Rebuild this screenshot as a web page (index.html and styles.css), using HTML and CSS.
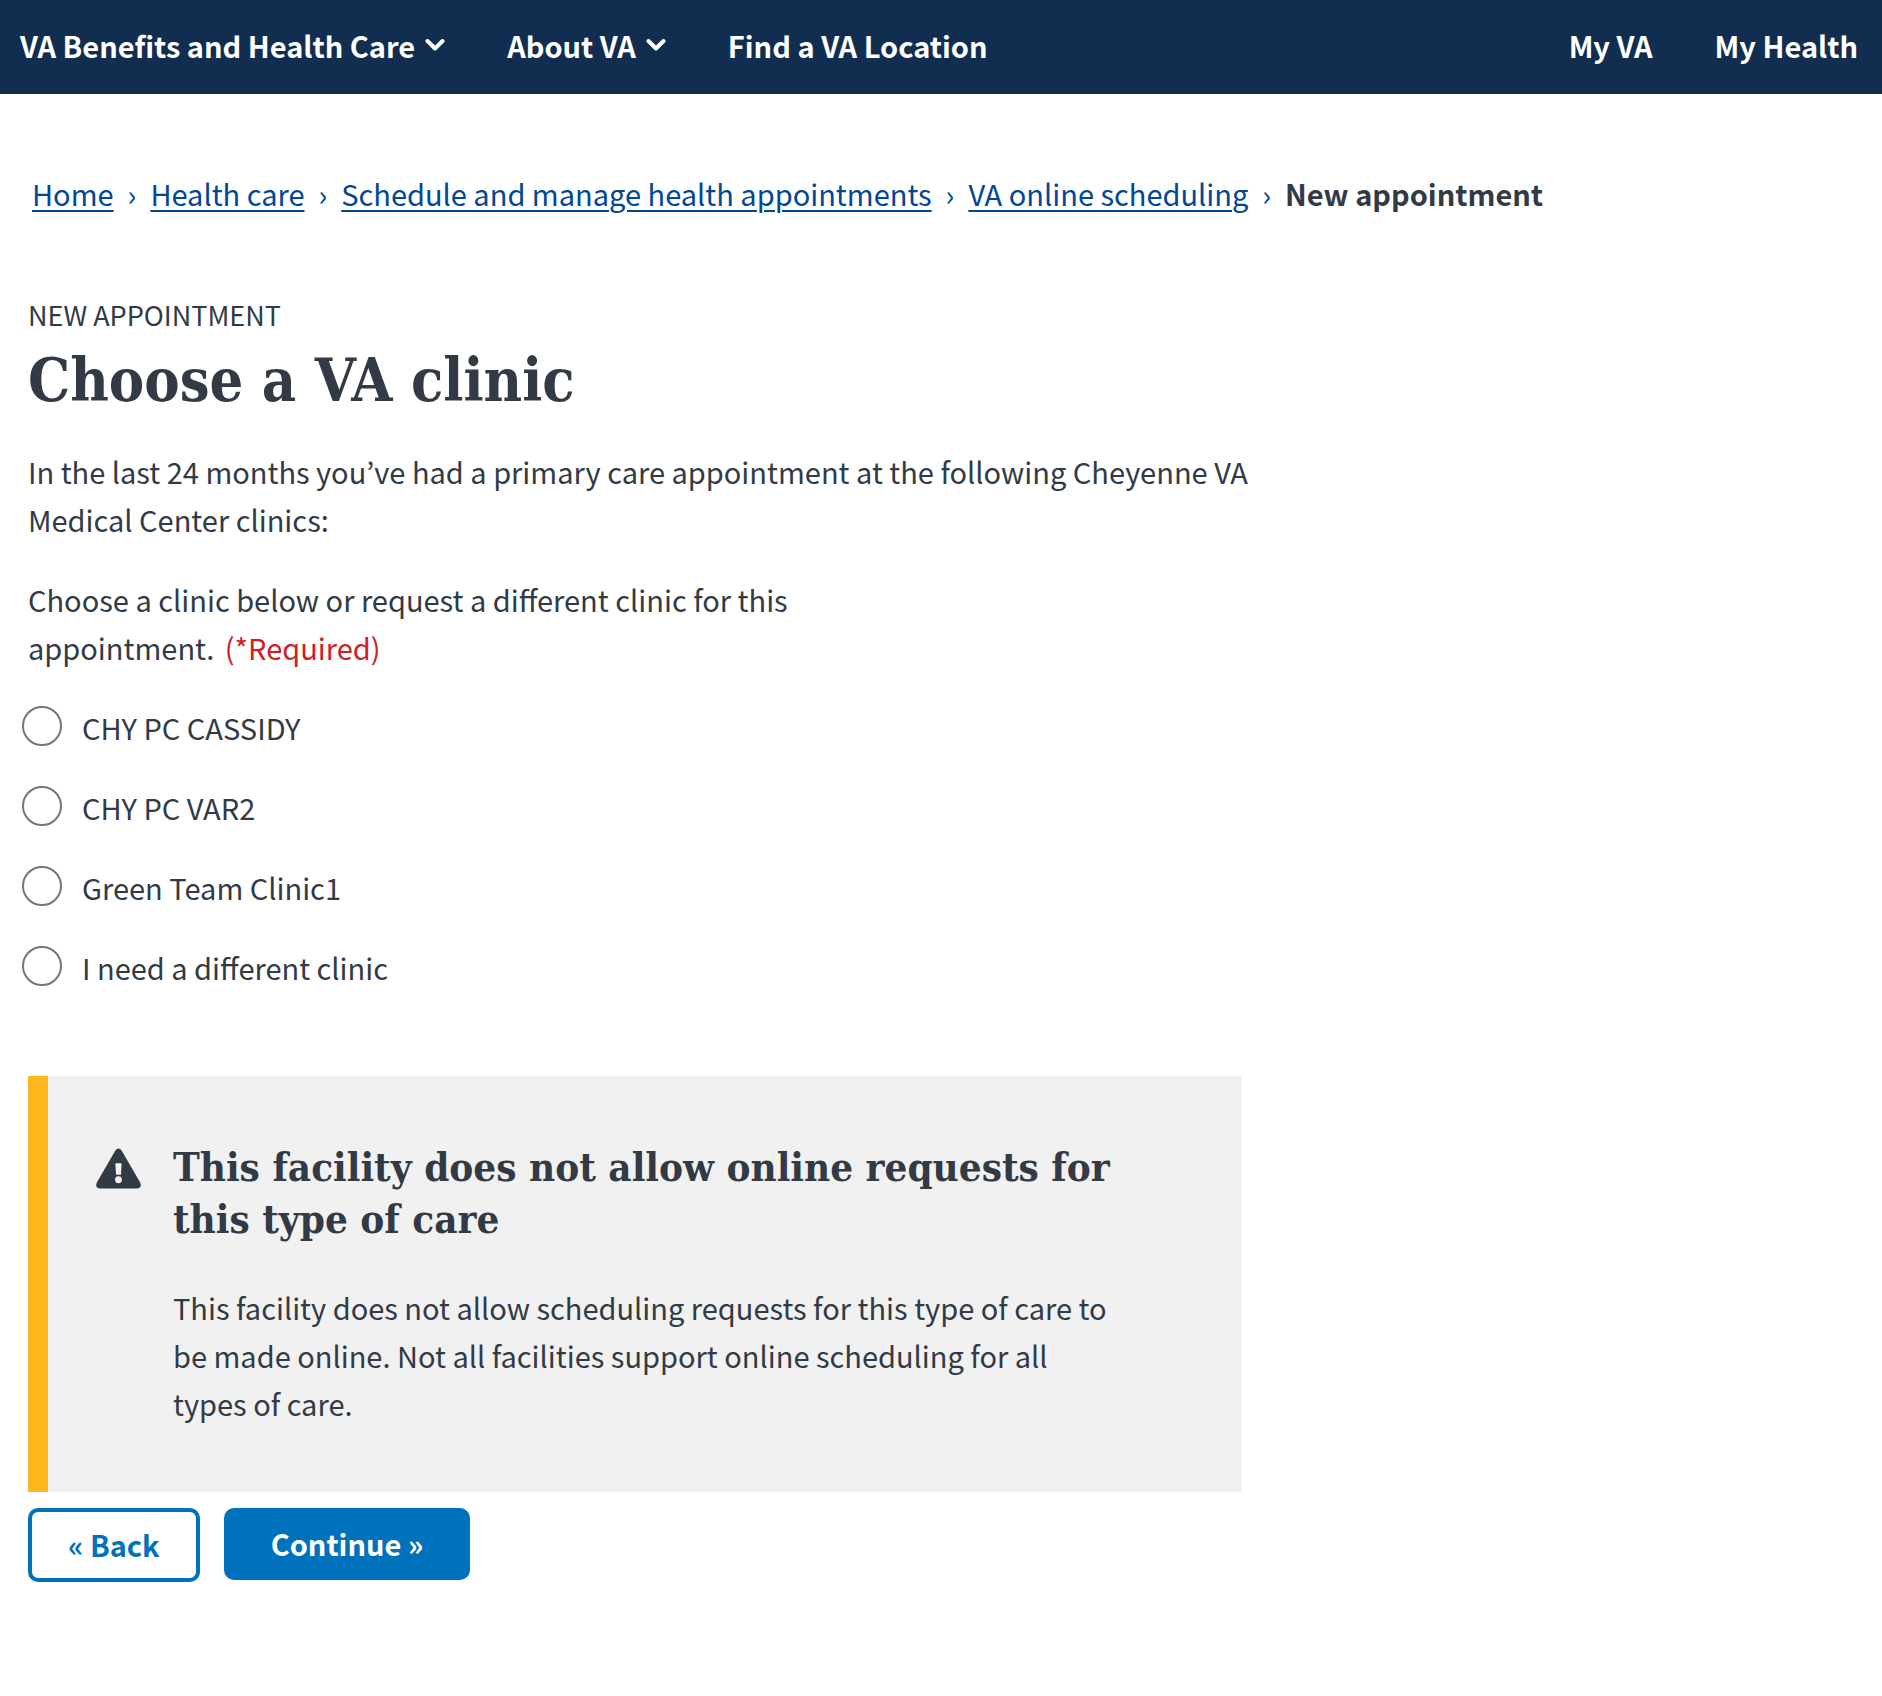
FILE: index.html
```html
<!DOCTYPE html>
<html lang="en">
<head>
<meta charset="utf-8">
<meta name="viewport" content="width=device-width, initial-scale=1">
<title>Choose a VA clinic</title>
<link rel="stylesheet" href="styles.css">
</head>
<body>
<header class="site-header">
  <nav class="main-nav" aria-label="Main">
    <div class="nav-group">
      <button class="nav-item" type="button" aria-expanded="false">VA Benefits and Health Care
        <svg class="chevron" viewBox="0 0 20 14" aria-hidden="true"><path d="M2.500 3L10 10.500L17.500 3"/></svg>
      </button>
      <button class="nav-item" type="button" aria-expanded="false">About VA
        <svg class="chevron" viewBox="0 0 20 14" aria-hidden="true"><path d="M2.500 3L10 10.500L17.500 3"/></svg>
      </button>
      <a class="nav-item" href="#">Find a VA Location</a>
    </div>
    <div class="nav-group">
      <a class="nav-item" href="#">My VA</a>
      <a class="nav-item" href="#">My Health</a>
    </div>
  </nav>
</header>

<nav class="breadcrumb" aria-label="Breadcrumb">
  <ol class="crumbs">
    <li class="crumb"><a href="#">Home</a></li>
    <li class="crumb"><a href="#">Health care</a></li>
    <li class="crumb"><a href="#">Schedule and manage health appointments</a></li>
    <li class="crumb"><a href="#">VA online scheduling</a></li>
    <li class="crumb crumb-current" aria-current="page">New appointment</li>
  </ol>
</nav>

<main class="content">
  <p class="eyebrow">New appointment</p>
  <h1 class="title">Choose a VA clinic</h1>
  <p class="intro">In the last 24 months you’ve had a primary care appointment at the following Cheyenne VA Medical Center clinics:</p>
  <form class="clinic-form">
    <fieldset class="clinics">
      <legend class="legend">Choose a clinic below or request a different clinic for this appointment. <span class="required">(*Required)</span></legend>
      <div class="option"><input class="radio" type="radio" name="clinic" id="clinic-1"><label for="clinic-1">CHY PC CASSIDY</label></div>
      <div class="option"><input class="radio" type="radio" name="clinic" id="clinic-2"><label for="clinic-2">CHY PC VAR2</label></div>
      <div class="option"><input class="radio" type="radio" name="clinic" id="clinic-3"><label for="clinic-3">Green Team Clinic1</label></div>
      <div class="option"><input class="radio" type="radio" name="clinic" id="clinic-4"><label for="clinic-4">I need a different clinic</label></div>
    </fieldset>
    <section class="alert">
      <svg class="alert-icon" viewBox="0 0 46 42" aria-hidden="true">
        <path class="alert-shape" d="M19.500 2.500Q23-2.300 26.500 2.500L45 34.500Q47.500 40.500 42 41H4Q-1.500 40.500 1 34.500Z"/>
        <path class="alert-mark" d="M19.800 15H26.200L25.500 27H20.500Z"/>
        <circle class="alert-mark" cx="23" cy="32" r="3.500"/>
      </svg>
      <div class="alert-body">
        <h2 class="alert-title">This facility does not allow online requests for this type of care</h2>
        <p class="alert-text">This facility does not allow scheduling requests for this type of care to be made online. Not all facilities support online scheduling for all types of care.</p>
      </div>
    </section>
    <div class="actions">
      <button class="button button-secondary" type="button">« Back</button>
      <button class="button button-primary" type="submit">Continue »</button>
    </div>
  </form>
</main>
</body>
</html>
```
FILE: styles.css
```css
:root {
  --navy: #112e51;
  --ink: #323a45;
  --link: #004795;
  --blue: #0071bb;
  --sans: "Noto Sans CJK KR", "Noto Sans", sans-serif;
  --slab: "DejaVu Serif Condensed", "DejaVu Serif", serif;
}

* {
  box-sizing: border-box;
}

body {
  margin: 0;
  background: #fff;
  color: var(--ink);
  font: 29px/48px var(--sans);
}

h1, h2, p, ol, fieldset {
  margin: 0;
  padding: 0;
}

.site-header {
  background: var(--navy);
}

.main-nav {
  display: flex;
  justify-content: space-between;
  padding: 21px 24px 25px 20px;
}

.nav-group {
  display: flex;
  gap: 62px;
}

.nav-item {
  display: flex;
  align-items: center;
  gap: 10px;
  padding: 0;
  border: 0;
  background: none;
  color: #fff;
  font: bold 29px/48px var(--sans);
  text-decoration: none;
}

.chevron {
  width: 20px;
  height: 14px;
  fill: none;
  stroke: #fff;
  stroke-width: 4;
  stroke-linecap: round;
  stroke-linejoin: round;
}

.breadcrumb {
  padding: 75px 32px 0;
}

.crumbs {
  display: flex;
  flex-wrap: wrap;
  list-style: none;
}

.crumb a {
  color: var(--link);
  text-decoration-thickness: 2px;
  text-underline-offset: 4px;
}

.crumb:not(:last-child)::after {
  content: "›";
  margin: 0 14px;
  color: var(--link);
}

.crumb-current {
  font-weight: bold;
}

.content {
  max-width: 1270px;
  padding: 74px 28px 112px;
}

.eyebrow {
  font-size: 27px;
  text-transform: uppercase;
}

.title {
  margin-bottom: 24px;
  font: bold 59px/84px var(--slab);
}

.intro {
  margin: 0 -20px 32px 0;
}

.clinics {
  display: flex;
  flex-direction: column;
  gap: 32px;
  margin-bottom: 85px;
  border: 0;
}

.legend {
  max-width: 920px;
  margin-bottom: 32px;
  padding: 0;
}

.required {
  margin-left: 4px;
  color: #cd2026;
}

.option {
  display: flex;
  gap: 20px;
}

.radio {
  flex: none;
  appearance: none;
  width: 40px;
  height: 40px;
  margin: 3px 0 0 -6px;
  border: 2px solid #757575;
  border-radius: 50%;
  background: #fff;
}

.radio:checked {
  background: var(--blue);
  box-shadow: inset 0 0 0 4px #fff;
}

.alert {
  display: flex;
  gap: 32px;
  padding: 65px 128px 65px 48px;
  border-left: 20px solid #fdb81e;
  background: #f1f1f1;
}

.alert-icon {
  flex: none;
  width: 45px;
  height: 42px;
  margin-top: 7px;
}

.alert-shape {
  fill: var(--ink);
}

.alert-mark {
  fill: #f1f1f1;
}

.alert-title {
  margin-bottom: 38px;
  font: bold 40px/52px var(--slab);
}

.actions {
  display: flex;
  align-items: flex-start;
  gap: 24px;
  margin-top: 16px;
}

.button {
  border: 0;
  border-radius: 10px;
  padding: 11px 47px 13px;
  font: bold 29px/48px var(--sans);
}

.button-secondary {
  padding: 8px 36px 10px;
  border: 4px solid var(--blue);
  background: #fff;
  color: var(--blue);
}

.button-primary {
  background: var(--blue);
  color: #fff;
}
```
